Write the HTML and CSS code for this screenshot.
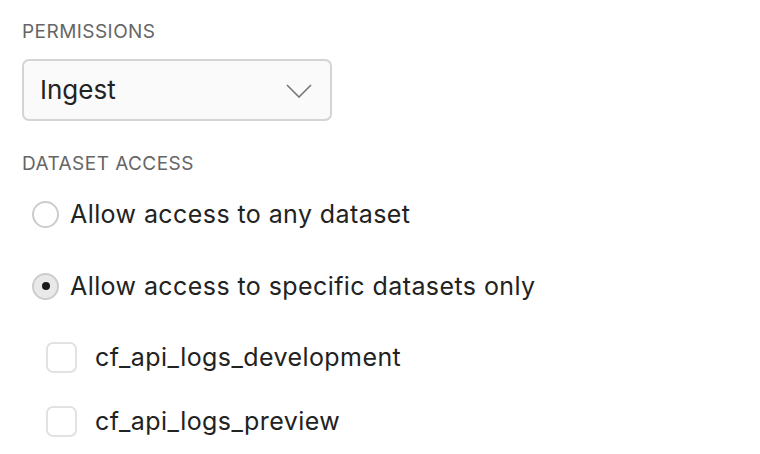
FILE: index.html
```html
<!DOCTYPE html>
<html>
<head>
<meta charset="utf-8">
<link rel="stylesheet" href="styles.css">
</head>
<body>
<div class="form">
  <div class="label">PERMISSIONS</div>
  <div class="select">
    <span class="select-value">Ingest</span>
    <svg class="chevron" width="26" height="14" viewBox="0 0 26 14"><path d="M1 1 L13 13 L25 1" fill="none" stroke="#777" stroke-width="1.6"/></svg>
  </div>
  <div class="label label-second">DATASET ACCESS</div>
  <div class="options">
    <div class="radio-row"><span class="radio"></span><span class="text">Allow access to any dataset</span></div>
    <div class="radio-row"><span class="radio checked"><span class="dot"></span></span><span class="text">Allow access to specific datasets only</span></div>
  </div>
  <div class="datasets">
    <div class="check-row"><span class="checkbox"></span><span class="text">cf_api_logs_development</span></div>
    <div class="check-row"><span class="checkbox"></span><span class="text">cf_api_logs_preview</span></div>
  </div>
</div>
</body>
</html>
```

FILE: styles.css
```css
html, body {
  margin: 0;
  padding: 0;
  background: #ffffff;
}
body {
  font-family: Inter, "Noto Sans", sans-serif;
  color: #222222;
}
.form {
  padding: 20px 0 0 22px;
  display: flex;
  flex-direction: column;
  align-items: flex-start;
}
.label {
  font-size: 19px;
  line-height: 24px;
  color: #666666;
  letter-spacing: 0.45px;
}
.label-second {
  margin-top: 31px;
}
.select {
  margin-top: 15px;
  box-sizing: border-box;
  width: 310px;
  height: 62px;
  border: 2px solid #d4d4d4;
  border-radius: 7px;
  background: #fafafa;
  display: flex;
  align-items: center;
  justify-content: space-between;
  padding: 0 18px 0 16px;
}
.select-value {
  font-size: 26px;
  line-height: 32px;
  color: #222222;
}
.chevron {
  display: block;
  margin-top: 2px;
}
.options {
  margin-top: 18px;
  display: flex;
  flex-direction: column;
  gap: 32px;
}
.radio-row, .check-row {
  display: flex;
  align-items: center;
  height: 40px;
}
.radio {
  box-sizing: border-box;
  width: 27px;
  height: 27px;
  border-radius: 50%;
  border: 2px solid #cccccc;
  background: #ffffff;
  margin-left: 10px;
  margin-right: 11px;
  display: flex;
  align-items: center;
  justify-content: center;
}
.radio.checked {
  background: #e9e9e9;
}
.dot {
  width: 8px;
  height: 8px;
  border-radius: 50%;
  background: #1a1a1a;
}
.text {
  font-size: 25px;
  line-height: 32px;
  color: #222222;
  letter-spacing: 0.42px;
}
.datasets {
  margin-top: 31px;
  display: flex;
  flex-direction: column;
  gap: 24px;
}
.checkbox {
  box-sizing: border-box;
  width: 31px;
  height: 31px;
  border-radius: 7px;
  border: 2px solid #e2e2e2;
  background: #ffffff;
  margin-left: 24px;
  margin-right: 18px;
}
```
